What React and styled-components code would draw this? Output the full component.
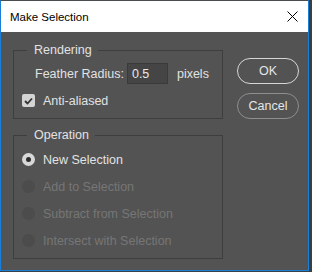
import React from 'react';
import styled, { createGlobalStyle } from 'styled-components';

const Global = createGlobalStyle`
    body {
        margin: 0;
        background: #3a3f44;
        font-family: "Liberation Sans", Arial, sans-serif;
    }
`;

const Window = styled.div`
    box-sizing: border-box;
    width: 309px;
    height: 271px;
    border: 1px solid #1a7fd9;
    border-top-color: #4a4d50;
    display: flex;
    flex-direction: column;
    background: #535353;
`;

const TitleBar = styled.div`
    height: 31px;
    flex: none;
    background: #ffffff;
    display: flex;
    align-items: center;
    justify-content: space-between;
    padding: 0 10px 0 9px;
    font-size: 11.5px;
    color: #000;
`;

const Body = styled.div`
    display: flex;
    gap: 14px;
    padding: 10px 0 0 12px;
`;

const Groups = styled.div`
    width: 210px;
    display: flex;
    flex-direction: column;
    gap: 8px;
`;

const Group = styled.fieldset`
    box-sizing: border-box;
    height: ${p => p.h}px;
    margin: 0;
    padding: 0 8px;
    min-width: 0;
    border: 1px solid #3e3e3e;
`;

const Legend = styled.legend`
    margin-left: 5px;
    padding: 0 6px 0 7px;
    font-size: 12.5px;
    line-height: 16px;
    color: #e2e2e2;
`;

const Row = styled.div`
    display: flex;
    align-items: center;
    height: ${p => p.h || 27}px;
    margin-top: ${p => p.mt || 0}px;
    padding-left: ${p => p.indent || 0}px;
    gap: ${p => (p.gap === undefined ? 8 : p.gap)}px;
    font-size: 12.5px;
    white-space: nowrap;
    color: ${p => (p.disabled ? '#767676' : '#e2e2e2')};
`;

const NumInput = styled.div`
    box-sizing: border-box;
    width: 41px;
    height: 21px;
    margin-left: 3px;
    background: #454545;
    border: 1px solid #3a3a3a;
    color: #e8e8e8;
    padding: 0 4px;
    display: flex;
    align-items: center;
`;

const Unit = styled.span`
    margin-left: 9px;
`;

const Check = styled.span`
    width: 13px;
    height: 13px;
    border-radius: 2px;
    background: #d4d4d4;
    display: flex;
    align-items: center;
    justify-content: center;
    flex: none;
`;

const Radio = styled.span`
    box-sizing: border-box;
    width: 13px;
    height: 13px;
    border-radius: 50%;
    flex: none;
    background: ${p => (p.on ? '#d8d8d8' : '#4c4c4c')};
    display: flex;
    align-items: center;
    justify-content: center;
    &::after {
        content: '';
        width: 5px;
        height: 5px;
        border-radius: 50%;
        background: #2c2c2c;
        display: ${p => (p.on ? 'block' : 'none')};
    }
`;

const Buttons = styled.div`
    width: 62px;
    padding-top: 16px;
    display: flex;
    flex-direction: column;
    gap: 9px;
`;

const Button = styled.div`
    box-sizing: border-box;
    height: 26px;
    border-radius: 13px;
    border: ${p => (p.primary ? '1.5px solid #d6d6d6' : '1px solid #8e8e8e')};
    color: #e6e6e6;
    font-size: 12.5px;
    display: flex;
    align-items: center;
    justify-content: center;
`;

const ops = [
    { label: 'New Selection', on: true },
    { label: 'Add to Selection' },
    { label: 'Subtract from Selection' },
    { label: 'Intersect with Selection' },
];

const App = () => {
    return (
        <Window>
            <Global />
            <TitleBar>
                <span>Make Selection</span>
                <svg width="11" height="11" viewBox="0 0 11 11">
                    <path d="M0.5 0.5L10.5 10.5M10.5 0.5L0.5 10.5" stroke="#000" strokeWidth="1" />
                </svg>
            </TitleBar>
            <Body>
                <Groups>
                    <Group h={77}>
                        <Legend>Rendering</Legend>
                        <Row h={21} mt={5} indent={13} gap={0}>
                            <span>Feather Radius:</span>
                            <NumInput>0.5</NumInput>
                            <Unit>pixels</Unit>
                        </Row>
                        <Row h={17} mt={8}>
                            <Check>
                                <svg width="9" height="8" viewBox="0 0 9 8">
                                    <path d="M1 4L3.5 6.5L8 1.5" stroke="#333" strokeWidth="1.8" fill="none" />
                                </svg>
                            </Check>
                            <span>Anti-aliased</span>
                        </Row>
                    </Group>
                    <Group h={132}>
                        <Legend>Operation</Legend>
                        <div style={{ height: 3 }} />
                        {ops.map((op, i) => (
                            <Row key={i} disabled={!op.on}>
                                <Radio on={op.on} />
                                <span>{op.label}</span>
                            </Row>
                        ))}
                    </Group>
                </Groups>
                <Buttons>
                    <Button primary>OK</Button>
                    <Button>Cancel</Button>
                </Buttons>
            </Body>
        </Window>
    );
};

export default App;
